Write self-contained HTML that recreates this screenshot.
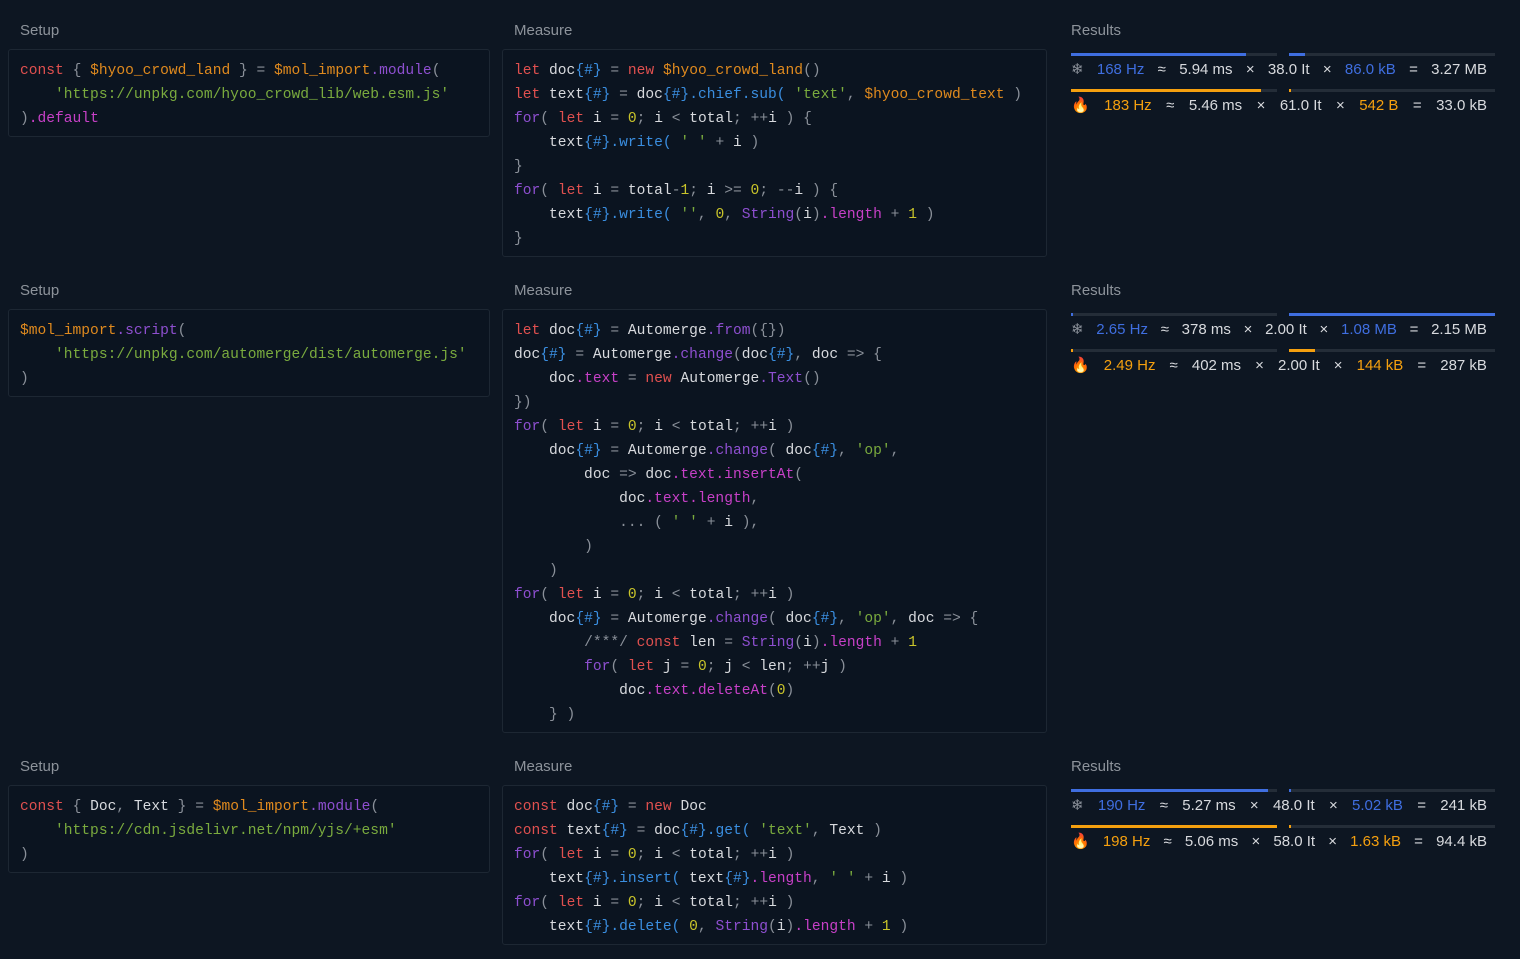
<!DOCTYPE html>
<html><head><meta charset="utf-8"><style>
body{margin:0;width:1520px;height:959px;background:#0d1622;position:relative;overflow:hidden;font-family:"Liberation Sans",sans-serif}
.t{position:absolute;color:#8d939b;font-size:15px;line-height:20px}
.p{position:absolute;background:#0b1420;border:1px solid #1d2733;border-radius:3px;padding:9px 11px 7px;box-sizing:border-box;font-family:"Liberation Mono",monospace;font-size:14.6px;line-height:24px;color:#d8dade;white-space:pre}
.k{color:#e0504f}.c{color:#8e4fd0}.o{color:#e08a1e}.g{color:#7aab3e}.b{color:#3a8ee0}.m{color:#c740c7}.n{color:#c9c42a}.q{color:#8a9099}
.bar{position:absolute;height:3px;background:#242d38;width:206px}
.bar i{position:absolute;left:0;top:0;height:3px}
.r{position:absolute;left:1071px;width:416px;display:flex;justify-content:space-between;font-size:15px;line-height:20px;color:#d8dade}
.bl{color:#3f6ee0}.or{color:#f5a00f}
</style></head><body>

<div class="t" style="left:20px;top:21px">Setup</div>
<div class="t" style="left:514px;top:21px">Measure</div>
<div class="t" style="left:1071px;top:21px">Results</div>
<div class="p" style="left:8px;top:49px;width:482px;height:88px"><span class="k">const</span> <span class="q">{</span> <span class="o">$hyoo_crowd_land</span> <span class="q">}</span> <span class="q">=</span> <span class="o">$mol_import</span><span class="c">.module</span><span class="q">(</span>
    <span class="g">'https://unpkg.com/hyoo_crowd_lib/web.esm.js'</span>
<span class="q">)</span><span class="m">.default</span></div>
<div class="p" style="left:502px;top:49px;width:545px;height:208px"><span class="k">let</span> doc<span class="b">{#}</span> <span class="q">=</span> <span class="k">new</span> <span class="o">$hyoo_crowd_land</span><span class="q">()</span>
<span class="k">let</span> text<span class="b">{#}</span> <span class="q">=</span> doc<span class="b">{#}.chief.sub(</span> <span class="g">'text'</span><span class="q">,</span> <span class="o">$hyoo_crowd_text</span> <span class="q">)</span>
<span class="c">for</span><span class="q">(</span> <span class="k">let</span> i <span class="q">=</span> <span class="n">0</span><span class="q">;</span> i <span class="q">&lt;</span> total<span class="q">;</span> <span class="q">++</span>i <span class="q">) {</span>
    text<span class="b">{#}.write(</span> <span class="g">' '</span> <span class="q">+</span> i <span class="q">)</span>
<span class="q">}</span>
<span class="c">for</span><span class="q">(</span> <span class="k">let</span> i <span class="q">=</span> total<span class="q">-</span><span class="n">1</span><span class="q">;</span> i <span class="q">&gt;=</span> <span class="n">0</span><span class="q">;</span> <span class="q">--</span>i <span class="q">) {</span>
    text<span class="b">{#}.write(</span> <span class="g">''</span><span class="q">,</span> <span class="n">0</span><span class="q">,</span> <span class="c">String</span><span class="q">(</span>i<span class="q">)</span><span class="m">.length</span> <span class="q">+</span> <span class="n">1</span> <span class="q">)</span>
<span class="q">}</span></div>
<div class="bar" style="left:1071px;top:53px"><i style="width:175px;background:#3f6ee0"></i></div>
<div class="bar" style="left:1289px;top:53px"><i style="width:16px;background:#3f6ee0"></i></div>
<div class="r" style="top:60px"><span class="q">❄</span><span class="bl">168 Hz</span><span>≈</span><span>5.94 ms</span><span>×</span><span>38.0 It</span><span>×</span><span class="bl">86.0 kB</span><span>=</span><span>3.27 MB</span></div>
<div class="bar" style="left:1071px;top:89px"><i style="width:190px;background:#f5a00f"></i></div>
<div class="bar" style="left:1289px;top:89px"><i style="width:2px;background:#f5a00f"></i></div>
<div class="r" style="top:96px"><span>🔥</span><span class="or">183 Hz</span><span>≈</span><span>5.46 ms</span><span>×</span><span>61.0 It</span><span>×</span><span class="or">542 B</span><span>=</span><span>33.0 kB</span></div>

<div class="t" style="left:20px;top:281px">Setup</div>
<div class="t" style="left:514px;top:281px">Measure</div>
<div class="t" style="left:1071px;top:281px">Results</div>
<div class="p" style="left:8px;top:309px;width:482px;height:88px"><span class="o">$mol_import</span><span class="c">.script</span><span class="q">(</span>
    <span class="g">'https://unpkg.com/automerge/dist/automerge.js'</span>
<span class="q">)</span></div>
<div class="p" style="left:502px;top:309px;width:545px;height:424px"><span class="k">let</span> doc<span class="b">{#}</span> <span class="q">=</span> Automerge<span class="c">.from</span><span class="q">({})</span>
doc<span class="b">{#}</span> <span class="q">=</span> Automerge<span class="c">.change</span><span class="q">(</span>doc<span class="b">{#}</span><span class="q">,</span> doc <span class="q">=&gt; {</span>
    doc<span class="m">.text</span> <span class="q">=</span> <span class="k">new</span> Automerge<span class="c">.Text</span><span class="q">()</span>
<span class="q">})</span>
<span class="c">for</span><span class="q">(</span> <span class="k">let</span> i <span class="q">=</span> <span class="n">0</span><span class="q">;</span> i <span class="q">&lt;</span> total<span class="q">;</span> <span class="q">++</span>i <span class="q">)</span>
    doc<span class="b">{#}</span> <span class="q">=</span> Automerge<span class="c">.change</span><span class="q">(</span> doc<span class="b">{#}</span><span class="q">,</span> <span class="g">'op'</span><span class="q">,</span>
        doc <span class="q">=&gt;</span> doc<span class="m">.text.insertAt</span><span class="q">(</span>
            doc<span class="m">.text.length</span><span class="q">,</span>
            <span class="q">...</span> <span class="q">(</span> <span class="g">' '</span> <span class="q">+</span> i <span class="q">),</span>
        <span class="q">)</span>
    <span class="q">)</span>
<span class="c">for</span><span class="q">(</span> <span class="k">let</span> i <span class="q">=</span> <span class="n">0</span><span class="q">;</span> i <span class="q">&lt;</span> total<span class="q">;</span> <span class="q">++</span>i <span class="q">)</span>
    doc<span class="b">{#}</span> <span class="q">=</span> Automerge<span class="c">.change</span><span class="q">(</span> doc<span class="b">{#}</span><span class="q">,</span> <span class="g">'op'</span><span class="q">,</span> doc <span class="q">=&gt; {</span>
        <span class="q">/***/</span> <span class="k">const</span> len <span class="q">=</span> <span class="c">String</span><span class="q">(</span>i<span class="q">)</span><span class="m">.length</span> <span class="q">+</span> <span class="n">1</span>
        <span class="c">for</span><span class="q">(</span> <span class="k">let</span> j <span class="q">=</span> <span class="n">0</span><span class="q">;</span> j <span class="q">&lt;</span> len<span class="q">;</span> <span class="q">++</span>j <span class="q">)</span>
            doc<span class="m">.text.deleteAt</span><span class="q">(</span><span class="n">0</span><span class="q">)</span>
    <span class="q">} )</span></div>
<div class="bar" style="left:1071px;top:313px"><i style="width:2px;background:#3f6ee0"></i></div>
<div class="bar" style="left:1289px;top:313px"><i style="width:206px;background:#3f6ee0"></i></div>
<div class="r" style="top:320px"><span class="q">❄</span><span class="bl">2.65 Hz</span><span>≈</span><span>378 ms</span><span>×</span><span>2.00 It</span><span>×</span><span class="bl">1.08 MB</span><span>=</span><span>2.15 MB</span></div>
<div class="bar" style="left:1071px;top:349px"><i style="width:2px;background:#f5a00f"></i></div>
<div class="bar" style="left:1289px;top:349px"><i style="width:26px;background:#f5a00f"></i></div>
<div class="r" style="top:356px"><span>🔥</span><span class="or">2.49 Hz</span><span>≈</span><span>402 ms</span><span>×</span><span>2.00 It</span><span>×</span><span class="or">144 kB</span><span>=</span><span>287 kB</span></div>

<div class="t" style="left:20px;top:757px">Setup</div>
<div class="t" style="left:514px;top:757px">Measure</div>
<div class="t" style="left:1071px;top:757px">Results</div>
<div class="p" style="left:8px;top:785px;width:482px;height:88px"><span class="k">const</span> <span class="q">{</span> Doc<span class="q">,</span> Text <span class="q">}</span> <span class="q">=</span> <span class="o">$mol_import</span><span class="c">.module</span><span class="q">(</span>
    <span class="g">'https://cdn.jsdelivr.net/npm/yjs/+esm'</span>
<span class="q">)</span></div>
<div class="p" style="left:502px;top:785px;width:545px;height:160px"><span class="k">const</span> doc<span class="b">{#}</span> <span class="q">=</span> <span class="k">new</span> Doc
<span class="k">const</span> text<span class="b">{#}</span> <span class="q">=</span> doc<span class="b">{#}.get(</span> <span class="g">'text'</span><span class="q">,</span> Text <span class="q">)</span>
<span class="c">for</span><span class="q">(</span> <span class="k">let</span> i <span class="q">=</span> <span class="n">0</span><span class="q">;</span> i <span class="q">&lt;</span> total<span class="q">;</span> <span class="q">++</span>i <span class="q">)</span>
    text<span class="b">{#}.insert(</span> text<span class="b">{#}</span><span class="m">.length</span><span class="q">,</span> <span class="g">' '</span> <span class="q">+</span> i <span class="q">)</span>
<span class="c">for</span><span class="q">(</span> <span class="k">let</span> i <span class="q">=</span> <span class="n">0</span><span class="q">;</span> i <span class="q">&lt;</span> total<span class="q">;</span> <span class="q">++</span>i <span class="q">)</span>
    text<span class="b">{#}.delete(</span> <span class="n">0</span><span class="q">,</span> <span class="c">String</span><span class="q">(</span>i<span class="q">)</span><span class="m">.length</span> <span class="q">+</span> <span class="n">1</span> <span class="q">)</span></div>
<div class="bar" style="left:1071px;top:789px"><i style="width:197px;background:#3f6ee0"></i></div>
<div class="bar" style="left:1289px;top:789px"><i style="width:2px;background:#3f6ee0"></i></div>
<div class="r" style="top:796px"><span class="q">❄</span><span class="bl">190 Hz</span><span>≈</span><span>5.27 ms</span><span>×</span><span>48.0 It</span><span>×</span><span class="bl">5.02 kB</span><span>=</span><span>241 kB</span></div>
<div class="bar" style="left:1071px;top:825px"><i style="width:206px;background:#f5a00f"></i></div>
<div class="bar" style="left:1289px;top:825px"><i style="width:2px;background:#f5a00f"></i></div>
<div class="r" style="top:832px"><span>🔥</span><span class="or">198 Hz</span><span>≈</span><span>5.06 ms</span><span>×</span><span>58.0 It</span><span>×</span><span class="or">1.63 kB</span><span>=</span><span>94.4 kB</span></div>
</body></html>
